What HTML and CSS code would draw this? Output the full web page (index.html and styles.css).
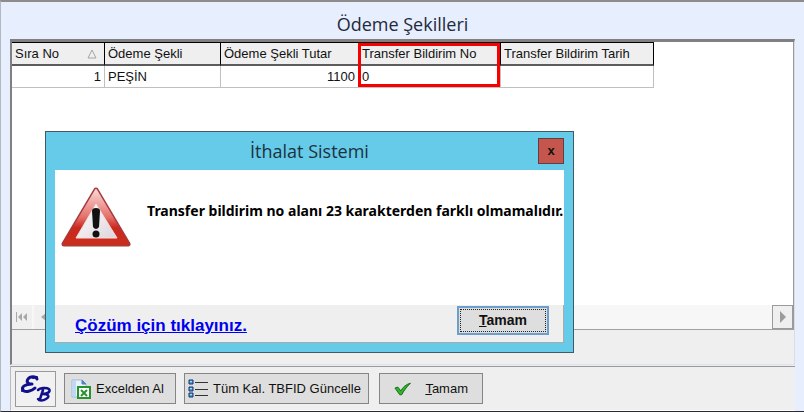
FILE: index.html
```html
<!DOCTYPE html>
<html lang="tr">
<head>
  <meta charset="UTF-8" />
  <title>Ödeme Şekilleri</title>
  <link rel="stylesheet" href="styles.css">
</head>
<body>
  <div class="window">
    <h1>Ödeme Şekilleri</h1>

    <div class="panel">
      <div class="grid">
        <table>
          <thead>
            <tr>
              <th class="col-no"><span class="sorted">Sıra No
                <svg width="10" height="10" viewBox="0 0 10 10"><path d="M5 1 L9 9 H1 Z" fill="none" stroke="#a5a5a5" /></svg></span></th>
              <th class="col-type">Ödeme Şekli</th>
              <th class="col-total">Ödeme Şekli Tutar</th>
              <th class="col-transfer">Transfer Bildirim No<div class="highlight"></div></th>
              <th class="col-date">Transfer Bildirim Tarih</th>
            </tr>
          </thead>
          <tbody>
            <tr>
              <td class="number">1</td>
              <td>PEŞİN</td>
              <td class="number">1100</td>
              <td>0</td>
              <td></td>
            </tr>
          </tbody>
        </table>

        <div class="scrollbar">
          <button class="nav" aria-label="İlk kayıt">
            <svg width="14" height="10" viewBox="0 0 14 10"><path d="M1 0h1v10h-1z M7 1v8L3 5z M12 1v8L8 5z" fill="#a8a8a8" /></svg>
          </button>
          <button class="nav" aria-label="Önceki kayıt">
            <svg width="14" height="10" viewBox="0 0 14 10"><path d="M9 1v8L4 5z" fill="#a8a8a8" /></svg>
          </button>
          <div class="track"></div>
          <button class="scroll-right" aria-label="Sağa kaydır">
            <svg width="8" height="12" viewBox="0 0 8 12"><path d="M1 0v12L7 6z" fill="#9c9c9c" /></svg>
          </button>
        </div>
      </div>
    </div>

    <div class="toolbar">
      <button class="logo" aria-label="EB">
        <svg width="34" height="30" viewBox="0 0 34 30" fill="none" stroke="#10108c" stroke-linecap="round" stroke-linejoin="round">
          <path d="M18 5 C17 2 11 2 9 5 C7 8 9 10 13 10 C6 10 2 13 4 16 C6 19 13 17 16 14" stroke-width="3" />
          <path d="M14 4 L18 3 M4 15 L3 17" stroke-width="2" />
          <path d="M19 16 C21 14 27 13 30 15 C32 18 28 20 24 20 C30 20 31 23 27 25 C24 27 20 27 19 25 M24 16 L21 25" stroke-width="2.500" />
        </svg>
      </button>
      <button class="tool excel">
        <svg width="20" height="20" viewBox="0 0 20 20">
          <path d="M1 1h10l4 4v13H1z" fill="#eaf3fc" stroke="#99b9dc" />
          <path d="M2 2h3v15H2z" fill="#bed9f4" />
          <path d="M11 1v4h4z" fill="#4d86c8" stroke="#4d86c8" />
          <rect x="7" y="8" width="12" height="11" fill="#fff" stroke="#27932c" stroke-width="2" />
          <path d="M10 11l6 6M16 11l-6 6" stroke="#27932c" stroke-width="2" />
        </svg>
        Excelden Al
      </button>
      <button class="tool update">
        <svg width="20" height="20" viewBox="0 0 20 20">
          <path d="M7 3.500h13M7 10.500h13M7 16.500h13" stroke="#333" />
          <path d="M1 1h4v4H1z M1 8h4v4H1z M1 14h4v4H1z" fill="#4da4cb" stroke="#172f78" />
          <path d="M2 2h2v1H2z M2 9h2v1H2z M2 15h2v1H2z" fill="#a7e2dc" />
        </svg>
        Tüm Kal. TBFID Güncelle
      </button>
      <button class="tool confirm">
        <svg width="18" height="14" viewBox="0 0 18 14"><path d="M1 6l3-1 3 4C9 5 13 2 17 1C13 5 10 9 8 13H6z" fill="#2fb32b" stroke="#176c18" /></svg>
        <span><u>T</u>amam</span>
      </button>
    </div>

    <div class="dialog" role="dialog" aria-labelledby="dialog-title">
      <div class="dialog-header">
        <h2 id="dialog-title">İthalat Sistemi</h2>
        <button class="close" aria-label="Kapat">x</button>
      </div>
      <div class="dialog-body">
        <div class="message">
          <svg class="warning" width="72" height="62" viewBox="0 0 72 62">
            <defs>
              <linearGradient id="red" x1="0" y1="0" x2="0" y2="1">
                <stop offset="0" stop-color="#f9d5d2" />
                <stop offset="0.5" stop-color="#e4716b" />
                <stop offset="0.7" stop-color="#c9281f" />
                <stop offset="1" stop-color="#cb2d1c" />
              </linearGradient>
              <linearGradient id="glass" x1="0" y1="0" x2="1" y2="1">
                <stop offset="0" stop-color="#fff" />
                <stop offset="1" stop-color="#ddd5dc" />
              </linearGradient>
            </defs>
            <path d="M36 4 L68 58 H4 Z" fill="url(#red)" stroke="#a63a3c" stroke-width="5" stroke-linejoin="round" />
            <path d="M36 4 L68 58 H4 Z" fill="url(#red)" stroke="url(#red)" stroke-width="2" stroke-linejoin="round" />
            <path d="M36 18 L57 52 H16 Z" fill="url(#glass)" stroke="#f5dedd" stroke-linejoin="round" />
            <path d="M32 25 Q32 22 36 22 Q40 22 40 25 L39 41 Q36 45 33 41 Z" fill="#111" />
            <circle cx="36" cy="48" r="3.500" fill="#111" />
          </svg>
          <p>Transfer bildirim no alanı 23 karakterden farklı olmamalıdır.</p>
        </div>
        <div class="dialog-footer">
          <a href="#">Çözüm için tıklayınız.</a>
          <button class="ok"><span><u>T</u>amam</span></button>
        </div>
      </div>
    </div>
  </div>
</body>
</html>
```
FILE: styles.css
```css
* {
  box-sizing: border-box;
  margin: 0;
  padding: 0;
}

body {
  font-family: "Liberation Sans", Arial, sans-serif;
  font-size: 13px;
  color: #111;
}

button {
  font: inherit;
  color: inherit;
}

.window {
  position: relative;
  display: flex;
  flex-direction: column;
  min-height: 100vh;
  padding: 0 9px;
  background: #e7eefe;
  border-top: 2px solid #8d8b8b;
  border-bottom: 1px solid #2c2a30;
  border-left: 1px solid #b5b8c2;
}

h1 {
  height: 37px;
  font: 18px/44px "Open Sans", "Noto Sans", sans-serif;
  color: #222a3a;
  text-align: center;
}

.panel {
  flex: 1;
  display: flex;
  flex-direction: column;
  padding-bottom: 34px;
  background: #efefef;
  border: 1px solid #b0b0b0;
  border-top: 3px solid #808080;
  border-left: 2px solid #808080;
  border-bottom: 1px solid #e2e2e2;
  border-right-color: #dcdcdc;
}

.grid {
  flex: 1;
  display: flex;
  flex-direction: column;
  background: #fff;
  border-right: 1px solid #999;
  border-bottom: 1px solid #a0a0a0;
}

table {
  width: 642px;
  table-layout: fixed;
  border-collapse: separate;
  border-spacing: 0;
}

th {
  height: 24px;
  padding: 0 3px;
  font-weight: normal;
  text-align: left;
  background: #efefef;
  border-top: 1px solid #000;
  border-right: 1px solid #000;
  border-bottom: 2px solid #5c5c5c;
  white-space: nowrap;
}

td {
  height: 22px;
  padding: 0 3px;
  border-right: 1px solid #c0c0c0;
  border-bottom: 1px solid #c0c0c0;
}

.col-no { width: 93px; }
.col-type { width: 116px; }
.col-total { width: 138px; }
.col-transfer { width: 142px; }
.col-date { width: 153px; }

.number {
  text-align: right;
}

.sorted {
  display: flex;
  justify-content: space-between;
  align-items: center;
  padding-right: 4px;
}

.col-transfer {
  position: relative;
}

/* red frame around the transfer number column */
.highlight {
  position: absolute;
  top: 0;
  left: -1px;
  width: 142px;
  height: 44px;
  border: 3px solid #f80000;
}

.scrollbar {
  display: flex;
  gap: 2px;
  height: 24px;
  margin-top: auto;
  background: #f7f7f7;
}

.nav {
  width: 20px;
  background: #f0f0f0;
  border: 0;
}

.nav svg,
.scroll-right svg {
  display: block;
  margin: auto;
}

.track {
  flex: 1;
}

.scroll-right {
  width: 21px;
  background: #efefef;
  border: 1px solid #9b9b9b;
}

.toolbar {
  display: flex;
  align-items: center;
  gap: 8px;
  height: 45px;
  padding: 0 4px;
  background: #efefef;
  border-top: 1px solid #999;
  border-left: 1px solid #bbb;
  border-bottom: 1px solid #fff;
  margin-top: 1px;
}

.logo {
  width: 41px;
  height: 36px;
  border: 1px solid #999;
  background: #f1f1f1;
}

.logo svg {
  display: block;
  margin: auto;
}

.tool {
  display: flex;
  align-items: center;
  gap: 5px;
  height: 31px;
  padding: 0 6px;
  background: #dedede;
  border: 1px solid #858585;
  white-space: nowrap;
}

.excel {
  width: 112px;
}

.update {
  width: 185px;
  padding: 0 3px;
}

.confirm {
  width: 104px;
  gap: 14px;
  padding: 0 14px;
  margin-left: 2px;
}

.dialog {
  position: absolute;
  top: 129px;
  left: 44px;
  width: 529px;
  padding: 0 9px 9px;
  background: #66cae9;
  border: 1px solid #3f5965;
}

.dialog-header {
  position: relative;
  height: 38px;
}

h2 {
  font: 18px/38px "Open Sans", "Noto Sans", sans-serif;
  color: #1b333d;
  text-align: center;
}

.close {
  position: absolute;
  top: 6px;
  right: 0;
  width: 26px;
  height: 26px;
  font-weight: bold;
  line-height: 20px;
  background: #c4564e;
  border: 1px solid #643d42;
}

.message {
  display: flex;
  height: 135px;
  padding: 16px 0 0 5px;
  background: #fff;
}

.message p {
  margin: 17px 0 0 15px;
  font-family: "Noto Sans", "Open Sans", sans-serif;
  font-size: 14px;
  font-weight: bold;
  line-height: 16px;
  color: #000;
  white-space: nowrap;
}

.dialog-footer {
  display: flex;
  justify-content: space-between;
  height: 38px;
  padding: 1px 14px 0 20px;
  background: #efefef;
  border-right: 1px solid #aaa;
  border-bottom: 1px solid #aaa;
}

.dialog-footer a {
  font-size: 17px;
  font-weight: bold;
  line-height: 39px;
  color: #0000f0;
}

.ok {
  width: 92px;
  height: 29px;
  padding: 1px;
  font-weight: bold;
  font-size: 14px;
  background: #dedede;
  border: 2px solid #6d9fcb;
}

.ok span {
  display: block;
  line-height: 21px;
  border: 1px dotted #222;
}
```
